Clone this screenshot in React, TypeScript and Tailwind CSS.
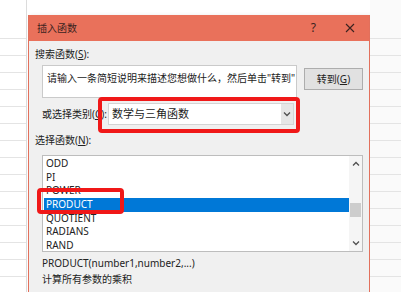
const functions = ['ODD', 'PI', 'POWER', 'PRODUCT', 'QUOTIENT', 'RADIANS', 'RAND']

function GridStrip({ lines }: { lines: number }) {
  return (
    <div className="flex flex-col pt-[22px]">
      {Array.from({ length: lines }).map((_, i) => (
        <div key={i} className="h-[17px] shrink-0 border-b border-[#e4e4e4]" />
      ))}
    </div>
  )
}

function Chevron({ up }: { up?: boolean }) {
  return (
    <svg width="8" height="6" viewBox="0 0 8 6" className="block">
      <path
        d={up ? 'M1 4.5 L4 1.5 L7 4.5' : 'M1 1.5 L4 4.5 L7 1.5'}
        fill="none"
        stroke="#505050"
        strokeWidth="1.3"
      />
    </svg>
  )
}

export default function App() {
  return (
    <div className="relative flex h-[292px] w-[401px] overflow-hidden bg-white font-['Noto_Sans','Noto_Sans_CJK_SC',sans-serif] text-[10px] text-[#222]">
      {/* sheet behind the dialog */}
      <div className="w-[28px] shrink-0 pr-[1px]">
        <div className="h-full border-r border-[#dcdcdc]">
          <GridStrip lines={16} />
        </div>
      </div>

      <div className="mt-[15px] flex w-[342px] shrink-0 flex-col border-x border-[#e2705c] shadow-[2px_0_4px_rgba(0,0,0,0.08)]">
        <div className="flex h-[26px] shrink-0 items-center bg-[#e9715b] pl-[8px] text-[#3b2320]">
          <span className="leading-[14px]">插入函数</span>
          <span className="ml-auto text-[12px] leading-[14px]">?</span>
          <svg width="10" height="10" viewBox="0 0 10 10" className="ml-[29px] mr-[14px]">
            <path d="M1 1 L9 9 M9 1 L1 9" stroke="#3b2320" strokeWidth="1.1" />
          </svg>
        </div>

        <div className="flex-1 bg-[#f0f0f0] pl-[6px] pt-[6px]">
          <div className="leading-[14px]">
            搜索函数(<span className="underline">S</span>):
          </div>

          <div className="ml-[7px] mt-[4px] flex items-start">
            <div className="h-[33px] w-[255px] border border-[#cacaca] bg-white pl-[4px] pt-[5px] leading-[14px]">
              请输入一条简短说明来描述您想做什么，然后单击"转到"
            </div>
            <div className="ml-[7px] mt-[3px] flex h-[22px] w-[59px] items-center justify-center border border-[#adadad] bg-[#e1e1e1] leading-[14px]">
              转到(<span className="underline">G</span>)
            </div>
          </div>

          <div className="ml-[7px] mt-[5px] flex h-[22px] items-center">
            <div className="w-[66px] shrink-0 whitespace-nowrap leading-[14px]">
              或选择类别(<span className="underline">C</span>):
            </div>
            <div className="flex h-[22px] w-[186px] shrink-0 items-center border border-[#d4d4d4] bg-white">
              <span className="pl-[3px] text-[11px] leading-[14px]">数学与三角函数</span>
              <div className="ml-auto flex h-full w-[12px] items-center justify-center bg-[#e6e6e6]">
                <Chevron />
              </div>
            </div>
          </div>

          <div className="mt-[8px] leading-[14px]">
            选择函数(<span className="underline">N</span>):
          </div>

          <div className="ml-[7px] mt-[8px] flex h-[97px] w-[321px] border border-[#bdbdbd] bg-white">
            <div className="flex-1 pl-[1px] pt-[1px]">
              {functions.map((name) => (
                <div
                  key={name}
                  className={
                    name === 'PRODUCT'
                      ? 'h-[13.7px] bg-[#0078d7] pl-[2px] leading-[13.7px] text-white'
                      : 'h-[13.7px] pl-[2px] leading-[13.7px]'
                  }
                >
                  {name}
                </div>
              ))}
            </div>
            <div className="flex w-[13px] flex-col items-center bg-[#f5f5f5] pt-[5px]">
              <Chevron up />
              <div className="mt-[36px] h-[14px] w-[11px] bg-[#cdcdcd]" />
              <div className="mt-auto mb-[5px]">
                <Chevron />
              </div>
            </div>
          </div>

          <div className="ml-[7px] mt-[4px] leading-[14px]">PRODUCT(number1,number2,...)</div>
          <div className="ml-[7px] mt-[2px] leading-[14px]">计算所有参数的乘积</div>
        </div>
      </div>

      <div className="flex-1 bg-[#fafafa]">
        <GridStrip lines={16} />
      </div>

      {/* red annotation boxes */}
      <div className="absolute left-[98px] top-[97px] h-[36px] w-[202px] rounded-[4px] border-[4px] border-[#f01818]" />
      <div className="absolute left-[37px] top-[188px] h-[26px] w-[87px] rounded-[4px] border-[4px] border-[#f01818]" />
    </div>
  )
}
